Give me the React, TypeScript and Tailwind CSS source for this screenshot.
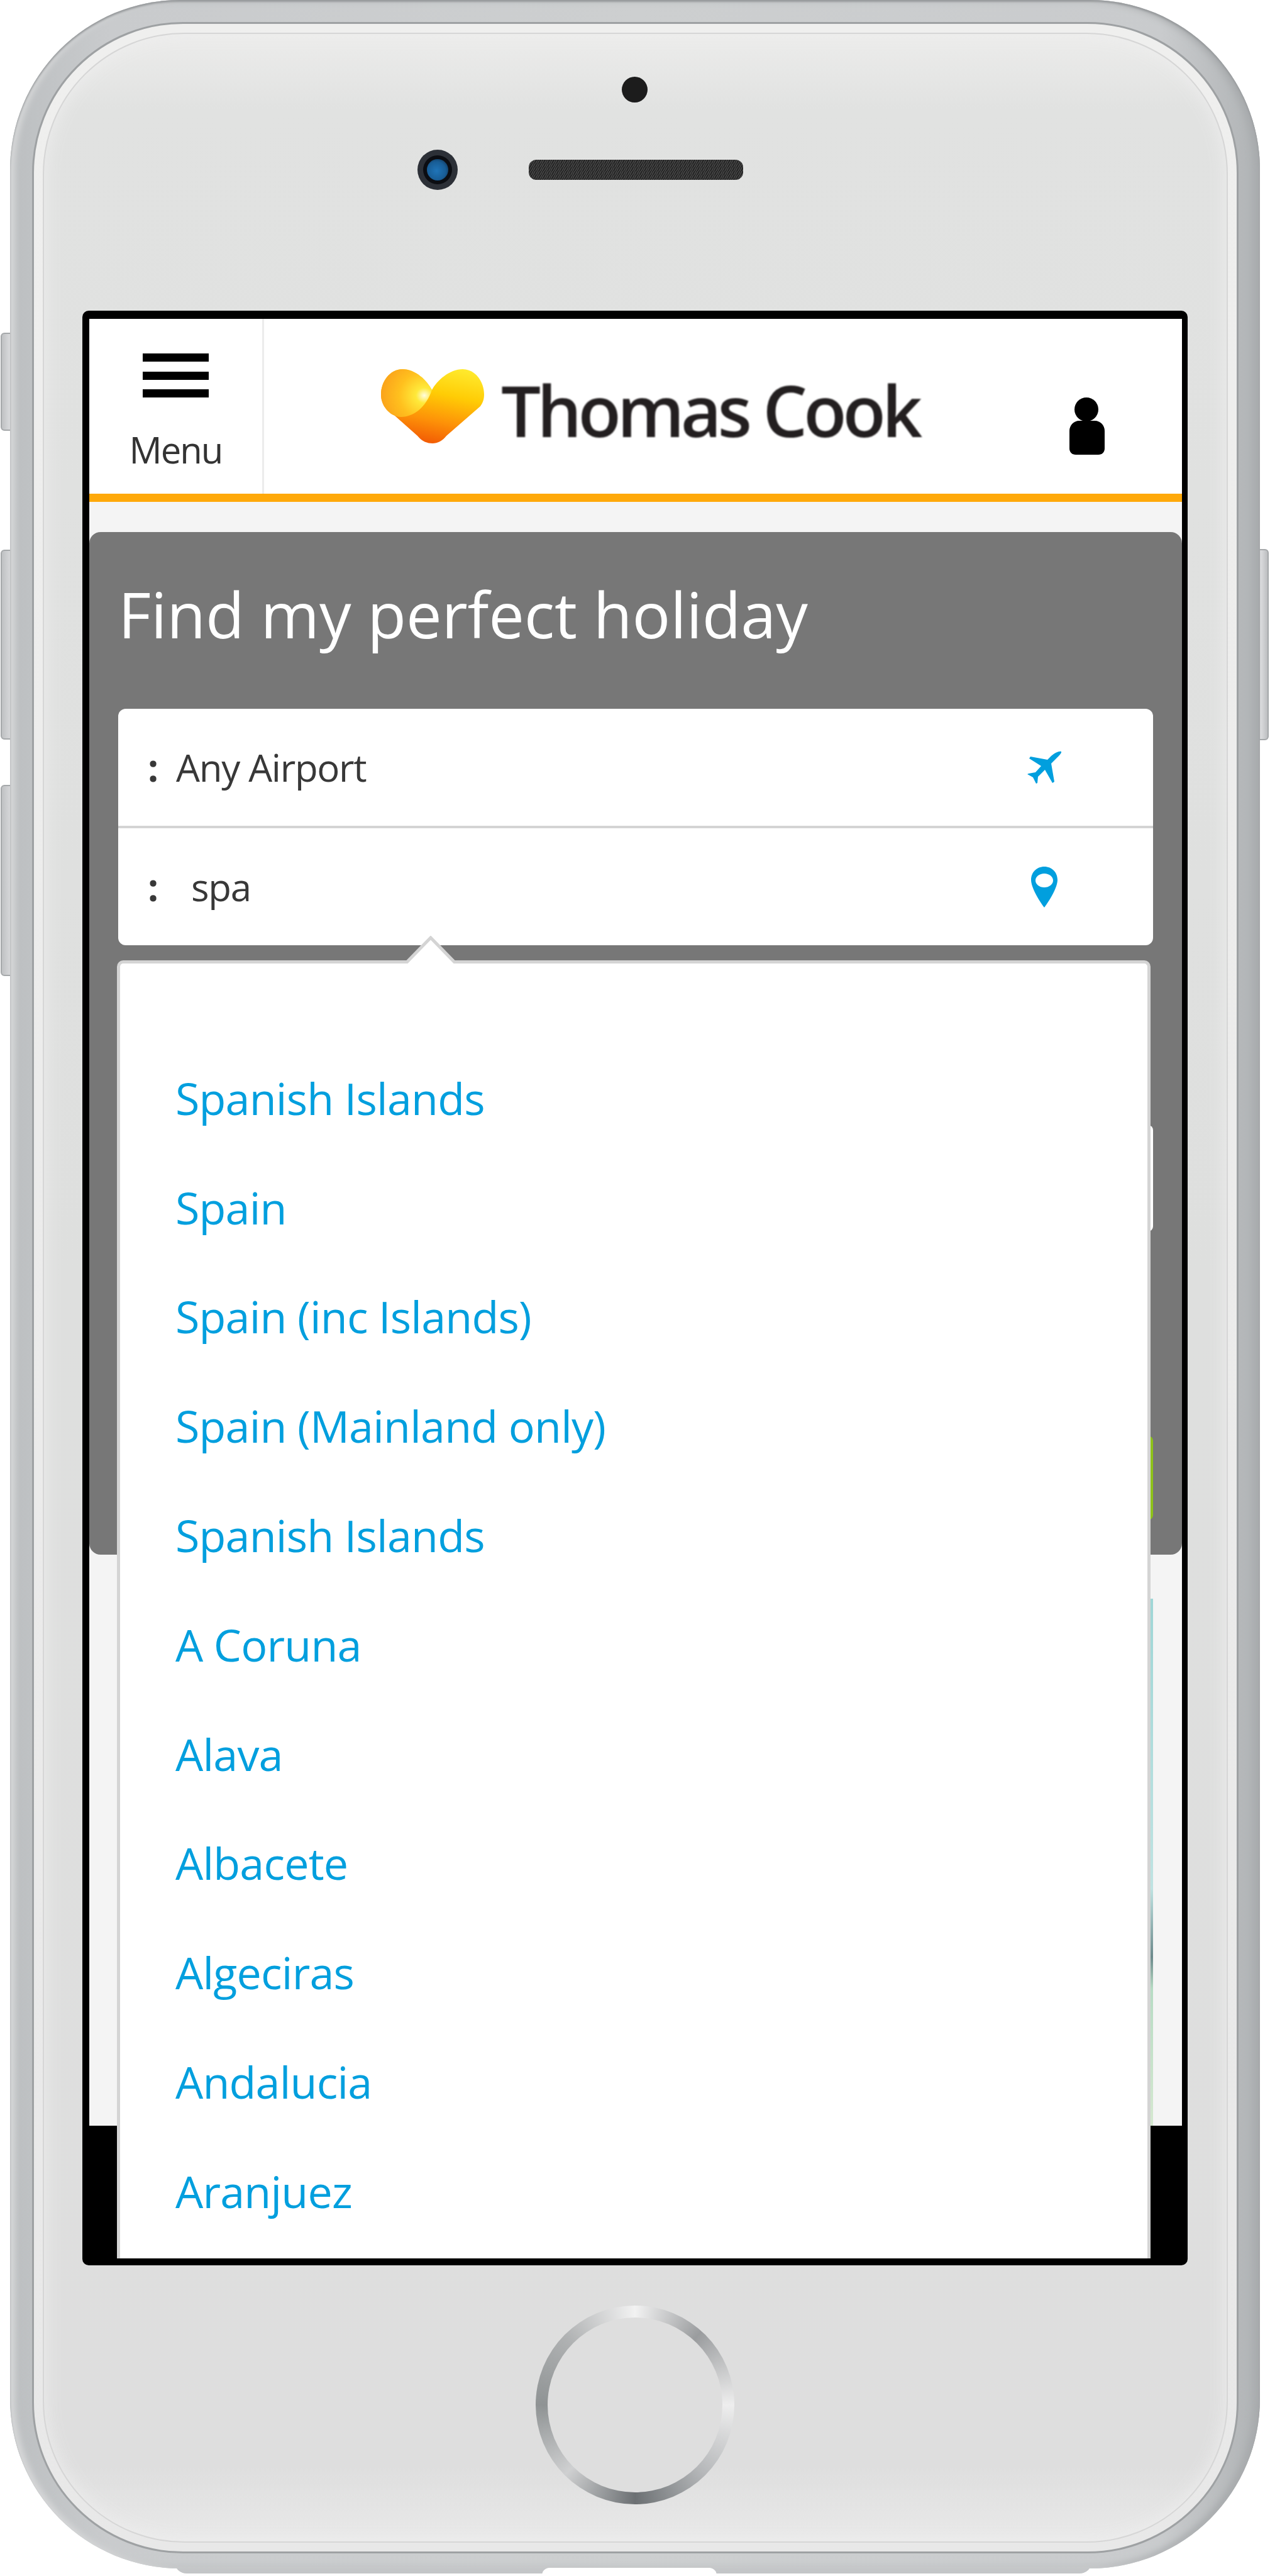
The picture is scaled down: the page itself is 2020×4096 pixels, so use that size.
const destinations = [
  "Spanish Islands",
  "Spain",
  "Spain (inc Islands)",
  "Spain (Mainland only)",
  "Spanish Islands",
  "A Coruna",
  "Alava",
  "Albacete",
  "Algeciras",
  "Andalucia",
  "Aranjuez",
];

function PlaneIcon() {
  return (
    <svg width="54" height="52" viewBox="0 0 54 52" className="fill-[#019fde]">
      <path d="M54 1C50 0 44 3 38 8L32 14L5 9L3 12L22 24L13 34L2 36L0 37L9 42L14 52L16 51L17 41L28 30L40 51L43 49L38 20L47 11C52 6 55 3 54 1Z" />
    </svg>
  );
}

function PinIcon() {
  return (
    <svg width="42" height="65" viewBox="0 0 42 65" className="fill-[#019fde]">
      <path
        fillRule="evenodd"
        d="M21 0C33 0 42 9 42 21C42 33 30 53 21 65C12 53 0 33 0 21C0 9 9 0 21 0ZM21 11C13 11 7 16 7 22C7 28 13 33 21 33C29 33 35 28 35 22C35 16 29 11 21 11Z"
      />
    </svg>
  );
}

function Heart() {
  return (
    <svg width="164" height="118" viewBox="0 0 164 118" className="blur-[0.6px]">
      <defs>
        <linearGradient id="heartBody" x1="0.75" y1="0" x2="0.45" y2="1">
          <stop offset="0" stopColor="#ffe92c" />
          <stop offset="0.35" stopColor="#ffcc05" />
          <stop offset="0.7" stopColor="#fd9208" />
          <stop offset="1" stopColor="#f25a04" />
        </linearGradient>
        <radialGradient id="heartLobe" cx="0.85" cy="0.55" r="0.9">
          <stop offset="0" stopColor="#fffde0" />
          <stop offset="0.18" stopColor="#ffe93a" />
          <stop offset="0.55" stopColor="#ffc01e" />
          <stop offset="1" stopColor="#fa9f1a" />
        </radialGradient>
      </defs>
      <path
        fill="url(#heartBody)"
        d="M81 33C73 18 55 0 34 0C14 0 0 20 0 40C0 48 2 53 5 59L58 106C65 115 74 118 82 118C90 118 98 114 104 106L158 59C162 53 164 48 164 40C164 20 150 0 130 0C109 0 89 18 81 33Z"
      />
      <path
        fill="url(#heartLobe)"
        d="M81 33C73 18 55 0 34 0C14 0 0 20 0 40C0 48 2 53 5 59C10 68 20 76 32 76C52 76 72 60 81 33Z"
      />
    </svg>
  );
}

function Speaker() {
  return (
    <svg width="341" height="32" viewBox="0 0 341 32" className="ml-[113px]">
      <defs>
        <pattern id="mesh" width="7" height="6" patternUnits="userSpaceOnUse">
          <rect width="7" height="6" fill="#262626" />
          <path d="M0 6L3 0M4 6L7 0" stroke="#5a5a5a" strokeWidth="1" />
        </pattern>
      </defs>
      <rect width="341" height="32" rx="12" fill="url(#mesh)" />
    </svg>
  );
}

function Camera() {
  return (
    <div className="flex h-16 w-16 items-center justify-center rounded-full bg-[#2c3037]">
      <div className="flex h-[46px] w-[46px] items-center justify-center rounded-full bg-[#0b0d12]">
        <div className="h-[34px] w-[34px] rounded-full bg-[radial-gradient(circle_at_45%_55%,#1f74b8_0%,#185d96_55%,#0d2238_100%)]" />
      </div>
    </div>
  );
}

function SearchRow({ value, children, indent }: { value: string; children: React.ReactNode; indent?: boolean }) {
  return (
    <div className="flex flex-1 items-center pl-[47px] pr-[146px] text-[60px] leading-none tracking-[-1.3px] text-[#383838]">
      <span className="w-[45px] font-bold">:</span>
      <span className={indent ? "pl-6" : ""}>{value}</span>
      <div className="ml-auto flex w-[54px] justify-center">{children}</div>
    </div>
  );
}

function Dropdown() {
  return (
    <div className="absolute left-[44px] top-[1020px] h-[2200px] w-[1644px] rounded-t-[10px] border-x-[5px] border-t-[5px] border-[#d4d4d4] bg-white">
      <svg width="84" height="44" viewBox="0 0 84 44" className="absolute left-[452px] top-[-44px]">
        <path d="M2 44L42 3L82 44Z" fill="#fff" />
        <path d="M2 44L42 3L82 44" fill="none" stroke="#d4d4d4" strokeWidth="5" />
      </svg>
      <ul className="flex flex-col pl-[88px] pt-[127px]">
        {destinations.map((name, i) => (
          <li key={i} className="flex h-[173.8px] items-center text-[70px] leading-none tracking-[-0.8px] text-[#019fde]">
            {name}
          </li>
        ))}
      </ul>
    </div>
  );
}

function Screen() {
  return (
    <div className="ml-[61px] mt-[192px] h-[3108px] w-[1758px] rounded-[10px] bg-black pb-[11px] pl-[11px] pr-[9px] pt-[13px]">
      <div className="relative flex h-full flex-col overflow-hidden bg-[#f4f4f4]">
        <header className="flex h-[291px] shrink-0 items-center border-b-[13px] border-[#ffa90a] bg-white">
          <div className="flex h-full w-[278px] shrink-0 flex-col items-center border-r-[3px] border-[#ececec] pt-[55px]">
            <div className="flex h-[70px] w-[105px] flex-col justify-between">
              <div className="h-[13px] bg-black" />
              <div className="h-[13px] bg-black" />
              <div className="h-[13px] bg-black" />
            </div>
            <span className="mt-[54px] text-[58px] leading-none tracking-[-2px] text-[#333]">Menu</span>
          </div>
          <div className="ml-[186px] flex items-center">
            <Heart />
            <span className="ml-[27px] mt-[12px] text-[112px] font-semibold leading-none tracking-[-6px] text-[#231f20] blur-[1px]">
              Thomas Cook
            </span>
          </div>
          <svg width="56" height="92" viewBox="0 0 56 92" className="ml-auto mr-[123px] mt-[62px] blur-[0.5px]">
            <circle cx="27" cy="20" r="19" />
            <path d="M16 38H40C50 38 56 46 56 54V82C56 88 52 92 46 92H10C4 92 0 88 0 82V54C0 46 6 38 16 38Z" />
          </svg>
        </header>
        <main className="flex flex-1 flex-col pt-[48px]">
          <section className="rounded-[18px] bg-[#777] px-[46px] pb-[55px] pt-[68px]">
            <h1 className="h-[213px] text-[101px] font-medium leading-[125px] tracking-[-0.2px] text-white">
              Find my perfect holiday
            </h1>
            <div className="flex h-[376px] flex-col rounded-[12px] bg-white">
              <SearchRow value="Any Airport">
                <PlaneIcon />
              </SearchRow>
              <div className="h-1 bg-[#d4d4d4]" />
              <SearchRow value="spa" indent>
                <PinIcon />
              </SearchRow>
            </div>
            <div className="mt-[286px] h-[169px] rounded-[8px] bg-white" />
            <div className="mt-[325px] h-[134px] rounded-[8px] bg-[#8ec21a]" />
          </section>
          <div className="ml-[46px] mr-[46px] mt-[70px] h-[838px] bg-[linear-gradient(180deg,#9fd6d6_0%,#bfe3e2_55%,#6d8a8c_68%,#b7dcc4_74%,#d5e8d0_100%)]" />
          <div className="mt-auto h-[211px] bg-black" />
        </main>
        <Dropdown />
      </div>
    </div>
  );
}

function SideButton({ className }: { className: string }) {
  return (
    <div
      className={`absolute rounded-[6px] border-2 border-[#a5a8aa] bg-[linear-gradient(90deg,#bfc1c3,#d8d9db_60%,#bcbec0)] ${className}`}
    />
  );
}

export default function App() {
  return (
    <div className="relative h-[4096px] w-[2020px] overflow-hidden bg-white font-['Open_Sans',sans-serif]">
      <SideButton className="left-px top-[529px] h-[156px] w-[24px]" />
      <SideButton className="left-px top-[874px] h-[302px] w-[28px]" />
      <SideButton className="left-px top-[1248px] h-[304px] w-[28px]" />
      <SideButton className="left-[1990px] top-[873px] h-[304px] w-[28px]" />

      <div className="absolute bottom-1 left-[277px] h-[20px] w-[1460px] rounded-b-[24px] bg-[#c4c6c8]" />

      <div className="relative ml-4 h-[4084px] w-[1988px] rounded-[270px] bg-[linear-gradient(90deg,#bcbfc1_0%,#c9cbcd_8%,#cdcfd0_50%,#c9cbcd_92%,#b0b3b5_100%)] pb-[24px] pl-[35px] pr-[34px] pt-[35px] shadow-[inset_0_3px_3px_#979a9c,inset_8px_0_10px_#d6d7d8,inset_-10px_0_12px_#a8abad]">
        <div className="h-full rounded-[240px] border-[3px] border-[#9ea1a3] bg-[linear-gradient(180deg,#efefee,#e8e8e8)] p-[14px]">
          <div className="flex h-full flex-col rounded-[225px] border-2 border-[#d6d6d6] bg-[linear-gradient(180deg,#ececeb_0%,#e1e2e1_3%,#dedfde_50%,#dedede_97%,#e9e9e9_100%)] pt-[68px] shadow-[inset_0_0_30px_#eeeeee]">
            <div className="ml-[919px] h-[41px] w-[41px] rounded-full bg-[#1c1c1c]" />
            <div className="ml-[594px] mt-[75px] flex items-center">
              <Camera />
              <Speaker />
            </div>
            <Screen />
            <div className="ml-[782px] mt-[64px] flex h-[316px] w-[316px] items-center justify-center rounded-full bg-[conic-gradient(#f2f2f2_0deg,#9a9c9e_42deg,#eeeeee_90deg,#b5b7b9_135deg,#6c7073_180deg,#cfd0d1_225deg,#8f9394_270deg,#b0b2b3_315deg,#f2f2f2_360deg)]">
              <div className="h-[278px] w-[278px] rounded-full bg-[#dedede]" />
            </div>
          </div>
        </div>
      </div>

      <div className="absolute bottom-0 left-[862px] h-[13px] w-[278px] rounded-t-[12px] bg-white" />
    </div>
  );
}
